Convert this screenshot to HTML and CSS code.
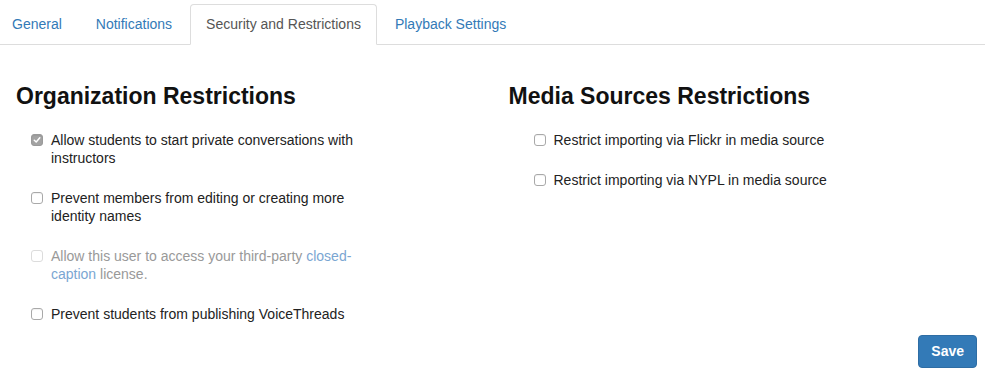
FILE: index.html
```html
<!DOCTYPE html>
<html lang="en">
<head>
    <meta charset="UTF-8">
    <meta name="viewport" content="width=device-width, initial-scale=1.0">
    <title>Settings</title>
    <link rel="stylesheet" href="styles.css">
</head>
<body>
    <ul class="nav-tabs">
        <li><a href="#">General</a></li>
        <li><a href="#">Notifications</a></li>
        <li class="active"><a href="#">Security and Restrictions</a></li>
        <li><a href="#">Playback Settings</a></li>
    </ul>

    <div class="tab-content">
        <div class="row">
            <div class="col">
                <h3>Organization Restrictions</h3>
                <div class="options">
                    <label class="option">
                        <span class="box checked-disabled">
                            <svg width="8" height="8" viewBox="0 0 8 8"><path d="M1.3 4.2 L3.2 6 L6.8 1.8" fill="none" stroke="#fff" stroke-width="1.5" stroke-linecap="round" stroke-linejoin="round"/></svg>
                        </span>
                        <span class="text">Allow students to start private conversations with instructors</span>
                    </label>
                    <label class="option">
                        <span class="box"></span>
                        <span class="text">Prevent members from editing or creating more identity names</span>
                    </label>
                    <label class="option disabled">
                        <span class="box"></span>
                        <span class="text">Allow this user to access your third-party <a href="#">closed-caption</a> license.</span>
                    </label>
                    <label class="option">
                        <span class="box"></span>
                        <span class="text">Prevent students from publishing VoiceThreads</span>
                    </label>
                </div>
            </div>
            <div class="col">
                <h3>Media Sources Restrictions</h3>
                <div class="options media">
                    <label class="option">
                        <span class="box"></span>
                        <span class="text">Restrict importing via Flickr in media source</span>
                    </label>
                    <label class="option">
                        <span class="box"></span>
                        <span class="text">Restrict importing via NYPL in media source</span>
                    </label>
                </div>
            </div>
        </div>

        <div class="actions">
            <button class="btn-primary">Save</button>
        </div>
    </div>
</body>
</html>
```

FILE: styles.css
```css
body {
    font-family: "Liberation Sans", Arial, sans-serif;
    font-size: 14px;
    line-height: 18px;
    color: #222;
    background-color: #fff;
    margin: 0;
    padding: 0;
}

a {
    color: #337ab7;
    text-decoration: none;
}

/* tabs */
.nav-tabs {
    list-style: none;
    margin: 0;
    padding: 4px 0 0 0;
    display: flex;
    border-bottom: 1px solid #ddd;
}

.nav-tabs li {
    margin-bottom: -1px;
}

.nav-tabs li:first-child {
    margin-left: -4px;
}

.nav-tabs li a {
    display: block;
    padding: 10px 15px;
    line-height: 19px;
    margin-right: 2px;
    border: 1px solid transparent;
    border-radius: 4px 4px 0 0;
}

.nav-tabs li.active a {
    color: #555;
    background-color: #fff;
    border-color: #ddd;
    border-bottom-color: transparent;
}

/* content */
.tab-content {
    padding-top: 38px;
}

.row {
    display: flex;
}

.col {
    width: 50%;
    padding-left: 16px;
    box-sizing: border-box;
}

h3 {
    font-size: 23px;
    font-weight: bold;
    line-height: 26px;
    color: #111;
    margin: 0 0 22px 0;
}

.options {
    padding-left: 15px;
    display: flex;
    flex-direction: column;
    gap: 22px;
}

.options.media {
    padding-left: 25px;
}

.option {
    display: flex;
    align-items: flex-start;
}

.option .text {
    width: 314px;
    margin-left: 8px;
}

.options.media .option .text {
    width: auto;
}

.box {
    width: 12px;
    height: 12px;
    margin-top: 3px;
    flex-shrink: 0;
    box-sizing: border-box;
    border: 1px solid #a9a9a9;
    border-radius: 3px;
    background-color: #fff;
    box-shadow: inset 0 1px 1px rgba(0, 0, 0, 0.06);
    display: flex;
    align-items: center;
    justify-content: center;
}

.box.checked-disabled {
    background-color: #a3a3a3;
    border-color: #9a9a9a;
}

.option.disabled .box {
    border-color: #dcdcdc;
    box-shadow: none;
}

.option.disabled .text {
    color: #999;
}

.option.disabled a {
    color: #7aa6d2;
}

/* footer */
.actions {
    display: flex;
    justify-content: flex-end;
    padding: 0 8px;
    margin-top: 12px;
}

.btn-primary {
    font-family: "Liberation Sans", Arial, sans-serif;
    font-size: 14px;
    font-weight: bold;
    line-height: 19px;
    padding: 6px 12px;
    color: #fff;
    background-color: #337ab7;
    border: 1px solid #2e6da4;
    border-radius: 4px;
    cursor: pointer;
}
```
